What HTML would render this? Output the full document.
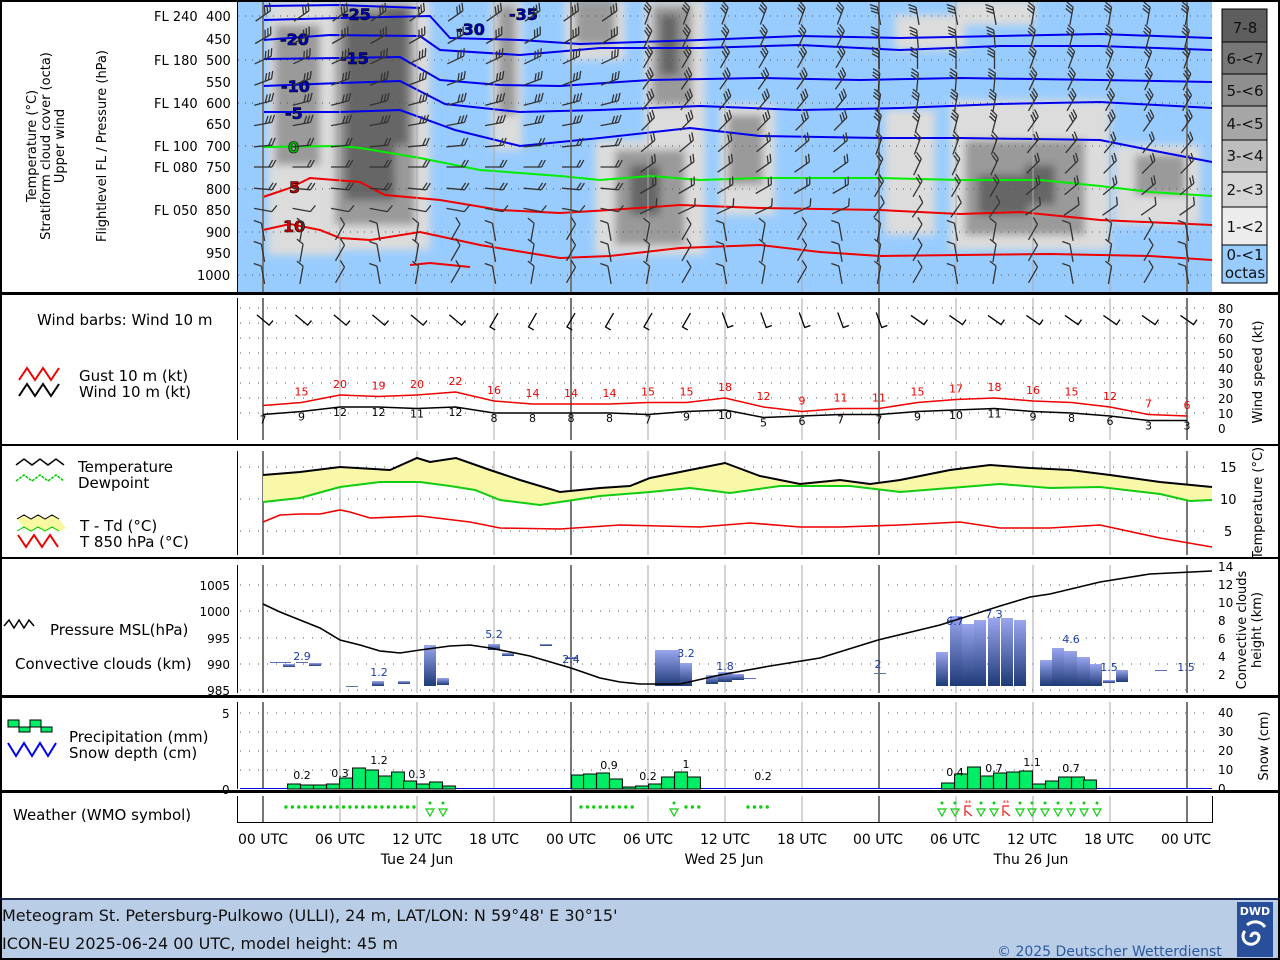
<!DOCTYPE html>
<html><head><meta charset="utf-8"><style>
html,body{margin:0;padding:0;background:#fff}
svg{display:block;font-family:"DejaVu Sans","Liberation Sans",sans-serif}
</style></head><body>
<svg id="s" width="1280" height="960" viewBox="0 0 1280 960" xmlns="http://www.w3.org/2000/svg">
<defs>
<filter id="bl" x="-20%" y="-20%" width="140%" height="140%"><feGaussianBlur stdDeviation="4"/></filter>
<linearGradient id="cg" x1="0" y1="0" x2="0" y2="1"><stop offset="0" stop-color="#9aa6ee"/><stop offset="1" stop-color="#1e3a78"/></linearGradient>
<clipPath id="c1"><rect x="238" y="2" width="974" height="290"/></clipPath>
</defs>
<rect x="0" y="0" width="1280" height="960" fill="#fff"/>
<!-- footer -->
<rect x="0" y="899" width="1280" height="61" fill="#bacde7"/>
<rect x="1" y="1" width="1278" height="898" fill="none" stroke="#000" stroke-width="2"/>
<line x1="0" y1="899" x2="1280" y2="899" stroke="#3355aa" stroke-width="1"/>
<rect x="0" y="958" width="1280" height="2" fill="#000"/>
<rect x="1278" y="899" width="2" height="61" fill="#000"/>
<rect x="0" y="899" width="2" height="61" fill="#000"/>
<text x="2" y="921" font-size="16" fill="#111">Meteogram St. Petersburg-Pulkowo (ULLI), 24 m, LAT/LON: N 59°48' E 30°15'</text>
<text x="2" y="949" font-size="16" fill="#111">ICON-EU 2025-06-24 00 UTC, model height: 45 m</text>
<text x="997" y="956" font-size="14" fill="#2a5aa0">© 2025 Deutscher Wetterdienst</text>
<rect x="1237" y="902" width="36" height="55" fill="#2a4f9a"/>
<text x="1255" y="915" font-size="11" font-weight="bold" fill="#fff" text-anchor="middle">DWD</text>
<path d="M1255,937 m-4,0 a4,4 0 1,1 8,0 a8,8 0 1,1 -14,-6 M1247,925 a12,12 0 0,1 18,2" fill="none" stroke="#fff" stroke-width="3"/>

<!-- panel separators -->
<g fill="#000">
<rect x="0" y="292" width="1280" height="3"/>
<rect x="0" y="444" width="1280" height="2"/>
<rect x="0" y="557" width="1280" height="2"/>
<rect x="0" y="695" width="1280" height="3"/>
<rect x="0" y="790" width="1280" height="3"/>
</g>

<!-- panel1 bg -->
<rect x="238" y="2" width="974" height="290" fill="#99ccfe"/>
<line x1="237.5" y1="2" x2="237.5" y2="292" stroke="#000"/>
<g clip-path="url(#c1)">
<g filter="url(#bl)">
<g fill="#dcdcdc">
<rect x="268" y="0" width="70" height="255"/>
<rect x="320" y="0" width="110" height="250"/>
<rect x="492" y="0" width="30" height="150"/>
<rect x="565" y="0" width="60" height="60"/>
<rect x="595" y="140" width="110" height="115"/>
<rect x="645" y="0" width="60" height="140"/>
<rect x="720" y="105" width="55" height="110"/>
<rect x="885" y="110" width="50" height="125"/>
<rect x="950" y="100" width="160" height="150"/>
<rect x="1115" y="145" width="85" height="80"/>
<rect x="895" y="15" width="70" height="35"/>
<rect x="955" y="0" width="80" height="25"/>
</g>
<g fill="#9a9a9a">
<rect x="275" y="25" width="45" height="140"/>
<rect x="335" y="5" width="80" height="220"/>
<rect x="498" y="5" width="18" height="110"/>
<rect x="575" y="0" width="40" height="45"/>
<rect x="615" y="150" width="70" height="95"/>
<rect x="652" y="5" width="40" height="100"/>
<rect x="728" y="115" width="35" height="70"/>
<rect x="965" y="140" width="120" height="95"/>
<rect x="1135" y="155" width="50" height="40"/>
</g>
<g fill="#666">
<rect x="345" y="15" width="50" height="185"/>
<rect x="383" y="5" width="25" height="140"/>
<rect x="660" y="15" width="18" height="60"/>
<rect x="630" y="165" width="30" height="50"/>
<rect x="978" y="175" width="50" height="40"/>
<rect x="1025" y="165" width="30" height="40"/>
</g>
</g>
<g stroke="#555" stroke-width="1" stroke-dasharray="1,6">
<line x1="238" y1="16" x2="1212" y2="16"/><line x1="238" y1="60" x2="1212" y2="60"/><line x1="238" y1="103" x2="1212" y2="103"/><line x1="238" y1="146" x2="1212" y2="146"/><line x1="238" y1="189" x2="1212" y2="189"/><line x1="238" y1="232" x2="1212" y2="232"/><line x1="238" y1="275" x2="1212" y2="275"/>
</g>
<g fill="none" stroke-width="2">
<path stroke="#0000ee" d="M263,20 L340,18 L430,16 L450,38 L520,40 L580,44 L700,40 L800,36 L900,38 L1000,36 L1100,34 L1212,38"/>
<path stroke="#0000ee" d="M263,6 L340,5 L420,8"/>
<path stroke="#0000ee" d="M263,40 L330,35 L420,36 L440,50 L520,55 L600,48 L700,48 L800,45 L900,50 L1000,46 L1100,46 L1212,50"/>
<path stroke="#0000ee" d="M263,59 L340,58 L400,57 L440,80 L500,85 L560,86 L650,80 L760,78 L860,80 L960,78 L1100,80 L1212,82"/>
<path stroke="#0000ee" d="M263,86 L340,83 L400,81 L445,104 L520,112 L600,110 L700,106 L800,110 L900,108 L1000,104 L1100,102 L1212,108"/>
<path stroke="#0000ee" d="M263,112 L340,112 L400,110 L455,130 L520,146 L600,138 L690,128 L760,136 L880,138 L960,138 L1100,140 L1150,150 L1212,162"/>
<path stroke="#00ee00" d="M263,147 L340,146 L360,148 L420,158 L480,170 L560,176 L600,180 L650,176 L700,180 L760,178 L880,178 L960,180 L1040,180 L1100,186 L1150,192 L1212,196"/>
<path stroke="#ee0000" d="M263,197 L290,188 L310,178 L360,182 L385,195 L440,200 L500,210 L560,213 L610,210 L680,205 L760,208 L880,210 L960,214 L1020,212 L1100,220 L1212,225"/>
<path stroke="#ee0000" d="M263,230 L290,224 L320,230 L340,238 L370,240 L420,232 L480,245 L560,258 L610,256 L680,248 L760,245 L820,252 L880,256 L960,255 L1050,254 L1150,256 L1212,260"/>
<path stroke="#ee0000" d="M410,265 L430,263 L470,267"/>
</g>
</g>
<g font-weight="bold" font-size="16" stroke="#000" stroke-width="0.6">
<text x="342" y="20" fill="#0000bb">-25</text>
<text x="456" y="35" fill="#0000bb">-30</text>
<text x="509" y="20" fill="#0000bb">-35</text>
<text x="280" y="45" fill="#0000bb">-20</text>
<text x="340" y="64" fill="#0000bb">-15</text>
<text x="281" y="92" fill="#0000bb">-10</text>
<text x="285" y="119" fill="#0000bb">-5</text>
<text x="288" y="153" fill="#00bb00">0</text>
<text x="289" y="193" fill="#cc0000">5</text>
<text x="283" y="232" fill="#cc0000">10</text>
</g>
<g id="vlines1"></g>
<g id="barbs1" stroke="#333" stroke-width="1.3" fill="none"></g>

<!-- left labels panel1 -->
<g font-size="13" fill="#000">
<text x="154" y="21">FL 240</text><text x="206" y="21">400</text>
<text x="206" y="44">450</text>
<text x="154" y="65">FL 180</text><text x="206" y="65">500</text>
<text x="206" y="87">550</text>
<text x="154" y="108">FL 140</text><text x="206" y="108">600</text>
<text x="206" y="129">650</text>
<text x="154" y="151">FL 100</text><text x="206" y="151">700</text>
<text x="154" y="172">FL 080</text><text x="206" y="172">750</text>
<text x="206" y="194">800</text>
<text x="154" y="215">FL 050</text><text x="206" y="215">850</text>
<text x="206" y="237">900</text>
<text x="206" y="258">950</text>
<text x="197" y="280">1000</text>
</g>
<g font-size="13" fill="#000" text-anchor="middle">
<text transform="translate(36,146) rotate(-90)">Temperature (°C)</text>
<text transform="translate(50,146) rotate(-90)">Stratiform cloud cover (octa)</text>
<text transform="translate(64,146) rotate(-90)">Upper wind</text>
<text transform="translate(106,146) rotate(-90)">Flightlevel FL / Pressure (hPa)</text>
</g>
<!-- octa legend -->
<g stroke="#000" stroke-width="1" font-size="15" text-anchor="middle">
<rect x="1222" y="9" width="45" height="33" fill="#5e5e5e"/>
<rect x="1222" y="42" width="45" height="32" fill="#777"/>
<rect x="1222" y="74" width="45" height="32" fill="#8f8f8f"/>
<rect x="1222" y="106" width="45" height="34" fill="#a6a6a6"/>
<rect x="1222" y="140" width="45" height="32" fill="#bdbdbd"/>
<rect x="1222" y="172" width="45" height="35" fill="#d6d6d6"/>
<rect x="1222" y="207" width="45" height="38" fill="#ececec"/>
<rect x="1222" y="245" width="45" height="38" fill="#99ccfe"/>
<g stroke="none" fill="#111">
<text x="1245" y="33">7-8</text><text x="1245" y="64">6-&lt;7</text><text x="1245" y="96">5-&lt;6</text><text x="1245" y="129">4-&lt;5</text><text x="1245" y="161">3-&lt;4</text><text x="1245" y="195">2-&lt;3</text><text x="1245" y="232">1-&lt;2</text><text x="1245" y="260">0-&lt;1</text><text x="1245" y="278">octas</text>
</g></g>

<!-- panel2 -->
<line x1="237.5" y1="298" x2="237.5" y2="440" stroke="#000"/>
<g stroke="#555" stroke-dasharray="1,8">
<line x1="240" y1="308" x2="1212" y2="308"/><line x1="240" y1="323" x2="1212" y2="323"/><line x1="240" y1="338" x2="1212" y2="338"/><line x1="240" y1="353" x2="1212" y2="353"/><line x1="240" y1="368" x2="1212" y2="368"/><line x1="240" y1="383" x2="1212" y2="383"/><line x1="240" y1="398" x2="1212" y2="398"/><line x1="240" y1="413" x2="1212" y2="413"/>
</g>
<g font-size="12" fill="#000">
<text x="1218" y="313">80</text><text x="1218" y="328">70</text><text x="1218" y="343">60</text><text x="1218" y="358">50</text><text x="1218" y="373">40</text><text x="1218" y="388">30</text><text x="1218" y="403">20</text><text x="1218" y="418">10</text><text x="1218" y="433">0</text>
<text transform="translate(1262,372) rotate(-90)" text-anchor="middle" font-size="13">Wind speed (kt)</text>
</g>
<text x="37" y="325" font-size="15">Wind barbs: Wind 10 m</text>
<path d="M19,380 l8,-12 l8,12 l8,-12 l8,12 l8,-12" fill="none" stroke="#e00" stroke-width="2"/>
<path d="M19,396 l8,-12 l8,12 l8,-12 l8,12 l8,-12" fill="none" stroke="#000" stroke-width="2"/>
<text x="79" y="381" font-size="15">Gust 10 m (kt)</text>
<text x="79" y="397" font-size="15">Wind 10 m (kt)</text>
<g id="p2"></g>

<!-- panel3 -->
<line x1="237.5" y1="451" x2="237.5" y2="555" stroke="#000"/>
<g stroke="#555" stroke-dasharray="1,8">
<line x1="240" y1="467" x2="1212" y2="467"/><line x1="240" y1="499" x2="1212" y2="499"/><line x1="240" y1="531" x2="1212" y2="531"/>
</g>
<g id="p3"></g>
<g font-size="13"><text x="1220" y="472">15</text><text x="1220" y="504">10</text><text x="1224" y="536">5</text>
<text transform="translate(1262,503) rotate(-90)" text-anchor="middle">Temperature (°C)</text></g>
<path d="M16,465 l8,-6 l8,6 l8,-6 l8,6 l8,-6 l8,6" fill="none" stroke="#000" stroke-width="1.5"/>
<path d="M16,481 l8,-6 l8,6 l8,-6 l8,6 l8,-6 l8,6" fill="none" stroke="#0c0" stroke-width="1.5" stroke-dasharray="3,1"/>
<text x="78" y="472" font-size="15">Temperature</text>
<text x="78" y="488" font-size="15">Dewpoint</text>
<path d="M17,519 l7,-4 l7,4 l7,-4 l7,4 l7,-4 l7,4 L66,528 l-7,4 l-7,-4 l-7,4 l-7,-4 l-7,4 l-7,-4 Z" fill="#f8f8a0" stroke="none"/>
<path d="M17,519 l7,-4 l7,4 l7,-4 l7,4 l7,-4 l7,4" fill="none" stroke="#000"/>
<path d="M17,531 l7,-4 l7,4 l7,-4 l7,4 l7,-4 l7,4" fill="none" stroke="#0c0"/>
<path d="M18,535 l8,12 l8,-12 l8,12 l8,-12 l8,12" fill="none" stroke="#e00" stroke-width="2"/>
<text x="80" y="531" font-size="15">T - Td (°C)</text>
<text x="80" y="547" font-size="15">T 850 hPa (°C)</text>

<!-- panel4 -->
<line x1="237.5" y1="565" x2="237.5" y2="693" stroke="#000"/>
<g stroke="#555" stroke-dasharray="1,8">
<line x1="240" y1="585" x2="1212" y2="585"/><line x1="240" y1="611" x2="1212" y2="611"/><line x1="240" y1="638" x2="1212" y2="638"/><line x1="240" y1="664" x2="1212" y2="664"/><line x1="240" y1="690" x2="1212" y2="690"/>
</g>
<g font-size="12" text-anchor="end"><text x="230" y="590">1005</text><text x="230" y="616">1000</text><text x="230" y="643">995</text><text x="230" y="669">990</text><text x="230" y="695">985</text></g>
<g font-size="12"><text x="1218" y="571">14</text><text x="1218" y="589">12</text><text x="1218" y="607">10</text><text x="1218" y="625">8</text><text x="1218" y="643">6</text><text x="1218" y="661">4</text><text x="1218" y="679">2</text>
<text transform="translate(1246,630) rotate(-90)" text-anchor="middle" font-size="13">Convective clouds</text>
<text transform="translate(1261,630) rotate(-90)" text-anchor="middle" font-size="13">height (km)</text></g>
<path d="M4,626 l5,-6 l5,8 l5,-8 l5,8 l5,-8 l5,6" fill="none" stroke="#000" stroke-width="1.5"/>
<text x="50" y="635" font-size="15">Pressure MSL(hPa)</text>
<text x="15" y="669" font-size="15">Convective clouds (km)</text>
<g id="p4"></g>

<!-- panel5 -->
<line x1="237.5" y1="702" x2="237.5" y2="789" stroke="#000"/>
<g stroke="#555" stroke-dasharray="1,8">
<line x1="240" y1="713" x2="1212" y2="713"/><line x1="240" y1="732" x2="1212" y2="732"/><line x1="240" y1="751" x2="1212" y2="751"/><line x1="240" y1="770" x2="1212" y2="770"/>
</g>
<g font-size="12"><text x="222" y="718">5</text><text x="222" y="794">0</text>
<text x="1218" y="717">40</text><text x="1218" y="736">30</text><text x="1218" y="755">20</text><text x="1218" y="774">10</text><text x="1218" y="793">0</text>
<text transform="translate(1268,746) rotate(-90)" text-anchor="middle" font-size="13">Snow (cm)</text></g>
<rect x="8" y="720" width="11" height="7" fill="#00ee66" stroke="#000"/><rect x="19" y="727" width="11" height="5" fill="#00ee66" stroke="#000"/><rect x="30" y="720" width="11" height="7" fill="#00ee66" stroke="#000"/><rect x="41" y="727" width="11" height="5" fill="#00ee66" stroke="#000"/>
<path d="M8,743 l8,13 l8,-13 l8,13 l8,-13 l8,13 l8,-13" fill="none" stroke="#0000ee" stroke-width="2"/>
<text x="69" y="742" font-size="15">Precipitation (mm)</text>
<text x="69" y="758" font-size="15">Snow depth (cm)</text>
<g id="p5"></g>

<!-- panel6 -->
<line x1="237.5" y1="796" x2="237.5" y2="822" stroke="#000"/>
<line x1="237" y1="822.5" x2="1213" y2="822.5" stroke="#000"/>
<line x1="1212.5" y1="796" x2="1212.5" y2="823" stroke="#000"/>
<text x="13" y="820" font-size="15">Weather (WMO symbol)</text>
<g id="p6"></g>

<!-- x labels -->
<g font-size="14" text-anchor="middle" fill="#000">
<text x="263" y="844">00 UTC</text><text x="340" y="844">06 UTC</text><text x="417" y="844">12 UTC</text><text x="494" y="844">18 UTC</text>
<text x="571" y="844">00 UTC</text><text x="648" y="844">06 UTC</text><text x="725" y="844">12 UTC</text><text x="802" y="844">18 UTC</text>
<text x="878" y="844">00 UTC</text><text x="955" y="844">06 UTC</text><text x="1032" y="844">12 UTC</text><text x="1109" y="844">18 UTC</text><text x="1186" y="844">00 UTC</text>
<text x="417" y="864">Tue 24 Jun</text><text x="724" y="864">Wed 25 Jun</text><text x="1031" y="864">Thu 26 Jun</text>
</g>
</svg>
<script>
(function(){
var NS="http://www.w3.org/2000/svg";
function el(p,t,a){var e=document.createElementNS(NS,t);for(var k in a)e.setAttribute(k,a[k]);document.getElementById(p).appendChild(e);return e;}
function txt(p,x,y,s,a){var e=el(p,"text",a);e.setAttribute("x",x);e.setAttribute("y",y);e.textContent=s;return e;}
var X0=263;
var panels=[[2,292,"vlines1"],[298,440,"p2"],[451,555,"p3"],[565,693,"p4"],[702,789,"p5"],[796,822,"p6"]];
panels.forEach(function(pp){for(var i=0;i<=12;i++){var x=X0+i*77;var major=(i%4==0);
el(pp[2],"line",{x1:x,x2:x,y1:pp[0],y2:pp[1],stroke:major?"#777":"#aaa","stroke-width":major?2:1});}});
var lev=[16,39,60,82,103,124,146,167,189,210,232,253,275];
for(var c=0;c<25;c++){var x=X0+c*38.5;for(var l=0;l<lev.length;l++){var y=lev[l];
var ang=(c<10? -35: (c<16? -70:(c<20?-100:-80)))+ (l*5); if(l>9)ang=-100+ (c%3)*20;
var r=ang*Math.PI/180,L=18;var dx=Math.cos(r)*L,dy=Math.sin(r)*L;
var x1=x-dx/2,y1=y-dy/2,x2=x+dx/2,y2=y+dy/2;
var d="M"+x1.toFixed(1)+","+y1.toFixed(1)+"L"+x2.toFixed(1)+","+y2.toFixed(1);
var n=l<6?3:(l<9?2:1);var pr=r-Math.PI/2;
for(var k=0;k<n;k++){var bx=x2-dx*k*0.18,by=y2-dy*k*0.18;d+="M"+bx.toFixed(1)+","+by.toFixed(1)+"l"+(Math.cos(pr+0.5)*8).toFixed(1)+","+(Math.sin(pr+0.5)*8).toFixed(1);}
el("barbs1","path",{d:d});}}
var g=[15,20,19,20,22,16,14,14,14,15,15,18,12,9,11,11,15,17,18,16,15,12,7,6];
var w=[7,9,12,12,11,12,8,8,8,8,7,9,10,5,6,7,7,9,10,11,9,8,6,3,3];
var pg="",pw="";var gg=[13].concat(g);
for(var i=0;i<25;i++){var x=X0+i*38.5;pw+=(i?"L":"M")+x+","+(428-1.5*w[i]-3);pg+=(i?"L":"M")+x+","+(428-1.5*gg[i]-3);}
el("p2","path",{d:pg,fill:"none",stroke:"#e00","stroke-width":1.5});
el("p2","path",{d:pw,fill:"none",stroke:"#000","stroke-width":1.5});
for(var i=0;i<24;i++)txt("p2",X0+(i+1)*38.5,428-1.5*g[i]-10,g[i],{"font-size":11,fill:"#e00","text-anchor":"middle"});
for(var i=0;i<25;i++)txt("p2",X0+i*38.5,428-1.5*w[i]+6,w[i],{"font-size":11,fill:"#000","text-anchor":"middle"});
for(var i=0;i<25;i++){var x=X0+i*38.5,a=(i<6?50:(i<12?-30:(i<17?20:55)))*Math.PI/180;
el("p2","path",{d:"M"+(x-Math.sin(a)*8)+","+(320-Math.cos(a)*8)+"L"+(x+Math.sin(a)*8)+","+(320+Math.cos(a)*8)+"l"+(Math.cos(a)*6)+","+(-Math.sin(a)*6),stroke:"#000",fill:"none","stroke-width":1.3});}
var T=[[263,475],[300,472],[340,467],[390,470],[417,458],[430,462],[456,458],[490,470],[520,480],[560,492],[600,488],[630,486],[650,478],[690,470],[725,463],[760,476],[800,484],[840,480],[870,484],[900,480],[950,470],[990,465],[1030,468],[1070,470],[1110,475],[1160,482],[1212,487]];
var D=[[263,502],[300,498],[340,487],[380,482],[420,482],[450,486],[475,490],[500,500],[540,505],[600,496],[650,492],[690,488],[730,493],[780,486],[850,486],[900,492],[950,488],[1000,484],[1050,488],[1100,487],[1160,494],[1190,501],[1212,500]];
function pts(a){return a.map(function(p){return p[0]+","+p[1]}).join(" ");}
el("p3","polygon",{points:pts(T)+" "+pts(D.slice().reverse()),fill:"#f8f8a8"});
el("p3","polyline",{points:pts(T),fill:"none",stroke:"#000","stroke-width":2});
el("p3","polyline",{points:pts(D),fill:"none",stroke:"#11cc11","stroke-width":2});
el("p3","polyline",{points:"263,522 280,515 300,514 320,514 340,510 350,512 370,518 420,516 470,522 500,528 560,529 620,525 700,527 750,523 800,527 840,527 900,525 960,522 1000,528 1050,528 1100,525 1160,538 1212,547",fill:"none",stroke:"#e00","stroke-width":1.6});
var B=[[270,662,21,1],[283,664,12,3],[296,662,12,1],[309,663,12,3],[346,686,12,1],[372,681,12,5],[398,681,12,3],[424,645,12,41],[437,678,12,7],[488,644,12,6],[502,653,12,3],[540,644,12,2],[565,657,12,2],[655,650,25,36],[680,663,12,23],[706,675,12,9],[718,672,14,10],[732,674,12,6],[744,678,12,1],[874,673,12,1],[936,652,12,34],[950,616,12,70],[962,624,12,62],[974,620,12,66],[988,618,12,68],[1001,618,12,68],[1014,620,12,66],[1040,660,12,26],[1052,648,12,38],[1064,651,13,35],[1077,657,13,29],[1090,664,12,22],[1103,680,12,3],[1116,670,12,12],[1155,670,12,1]];
B.forEach(function(b){el("p4","rect",{x:b[0],y:b[1],width:b[2],height:b[3],fill:"url(#cg)"});});
[["2.9",302,660],["1.2",379,676],["5.2",494,638],["2.4",571,663],["3.2",686,657],["1.8",725,670],["2",878,668],["6.7",955,625],["7.3",994,618],["4.6",1071,643],["1.5",1109,671],["1.5",1186,671]].forEach(function(t){txt("p4",t[1],t[2],t[0],{"font-size":11,fill:"#1a3caa","text-anchor":"middle"});});
el("p4","polyline",{points:"263,604 280,612 300,620 320,628 340,640 360,645 380,651 400,653 420,650 450,646 470,645 490,648 530,656 571,668 600,678 620,682 640,684 680,684 720,675 770,666 820,658 878,640 940,625 1000,606 1030,597 1050,594 1100,582 1150,574 1212,571",fill:"none",stroke:"#000","stroke-width":1.6});
el("p5","line",{x1:240,x2:1212,y1:788.5,y2:788.5,stroke:"#0000dd","stroke-width":1});
var P=[[294,784],[307,785],[320,785],[333,784],[346,778],[359,768],[372,770],[385,776],[398,772],[410,781],[423,784],[436,782],[449,786],[578,775],[590,774],[603,773],[616,779],[629,787],[642,786],[655,784],[668,777],[681,772],[694,777],[948,783],[961,774],[974,767],[987,776],[1000,773],[1013,772],[1026,771],[1039,784],[1052,781],[1065,777],[1078,777],[1090,780]];
P.forEach(function(p){el("p5","rect",{x:p[0]-6.4,y:p[1],width:12.8,height:789-p[1],fill:"#00ee66",stroke:"#000","stroke-width":1});});
[["0.2",302,779],["0.3",340,777],["1.2",379,764],["0.3",417,778],["0.9",609,769],["0.2",648,780],["1",686,768],["0.2",763,780],["0.4",955,776],["0.7",994,772],["1.1",1032,766],["0.7",1071,772]].forEach(function(t){txt("p5",t[1],t[2],t[0],{"font-size":11,fill:"#000","text-anchor":"middle"});});
function dot(x){el("p6","circle",{cx:x,cy:807,r:1.7,fill:"#11cc11"});}
function tri(x,c){el("p6","path",{d:"M"+(x-4)+",809 h8 l-4,7 z",fill:"none",stroke:c||"#11cc11","stroke-width":1.2});el("p6","circle",{cx:x,cy:803,r:1.5,fill:c||"#11cc11"});}
for(var x=286;x<=420;x+=6.4)dot(x);
tri(430);tri(443);
for(var x=581;x<=638;x+=6.4)dot(x);
tri(674);for(var x=686;x<=702;x+=6.4)dot(x);
for(var x=748;x<=768;x+=6.4)dot(x);
[942,955,981,994,1020,1032,1045,1058,1071,1084,1097].forEach(function(x){tri(x);});
[968,1006].forEach(function(x){el("p6","path",{d:"M"+(x-3)+",816 v-10 h6 M"+(x+4)+",816 l-6,-5",fill:"none",stroke:"#e22","stroke-width":1.3});txt("p6",x,805,"**",{"font-size":7,fill:"#e22","text-anchor":"middle"});});
})();
</script>
</body></html>
